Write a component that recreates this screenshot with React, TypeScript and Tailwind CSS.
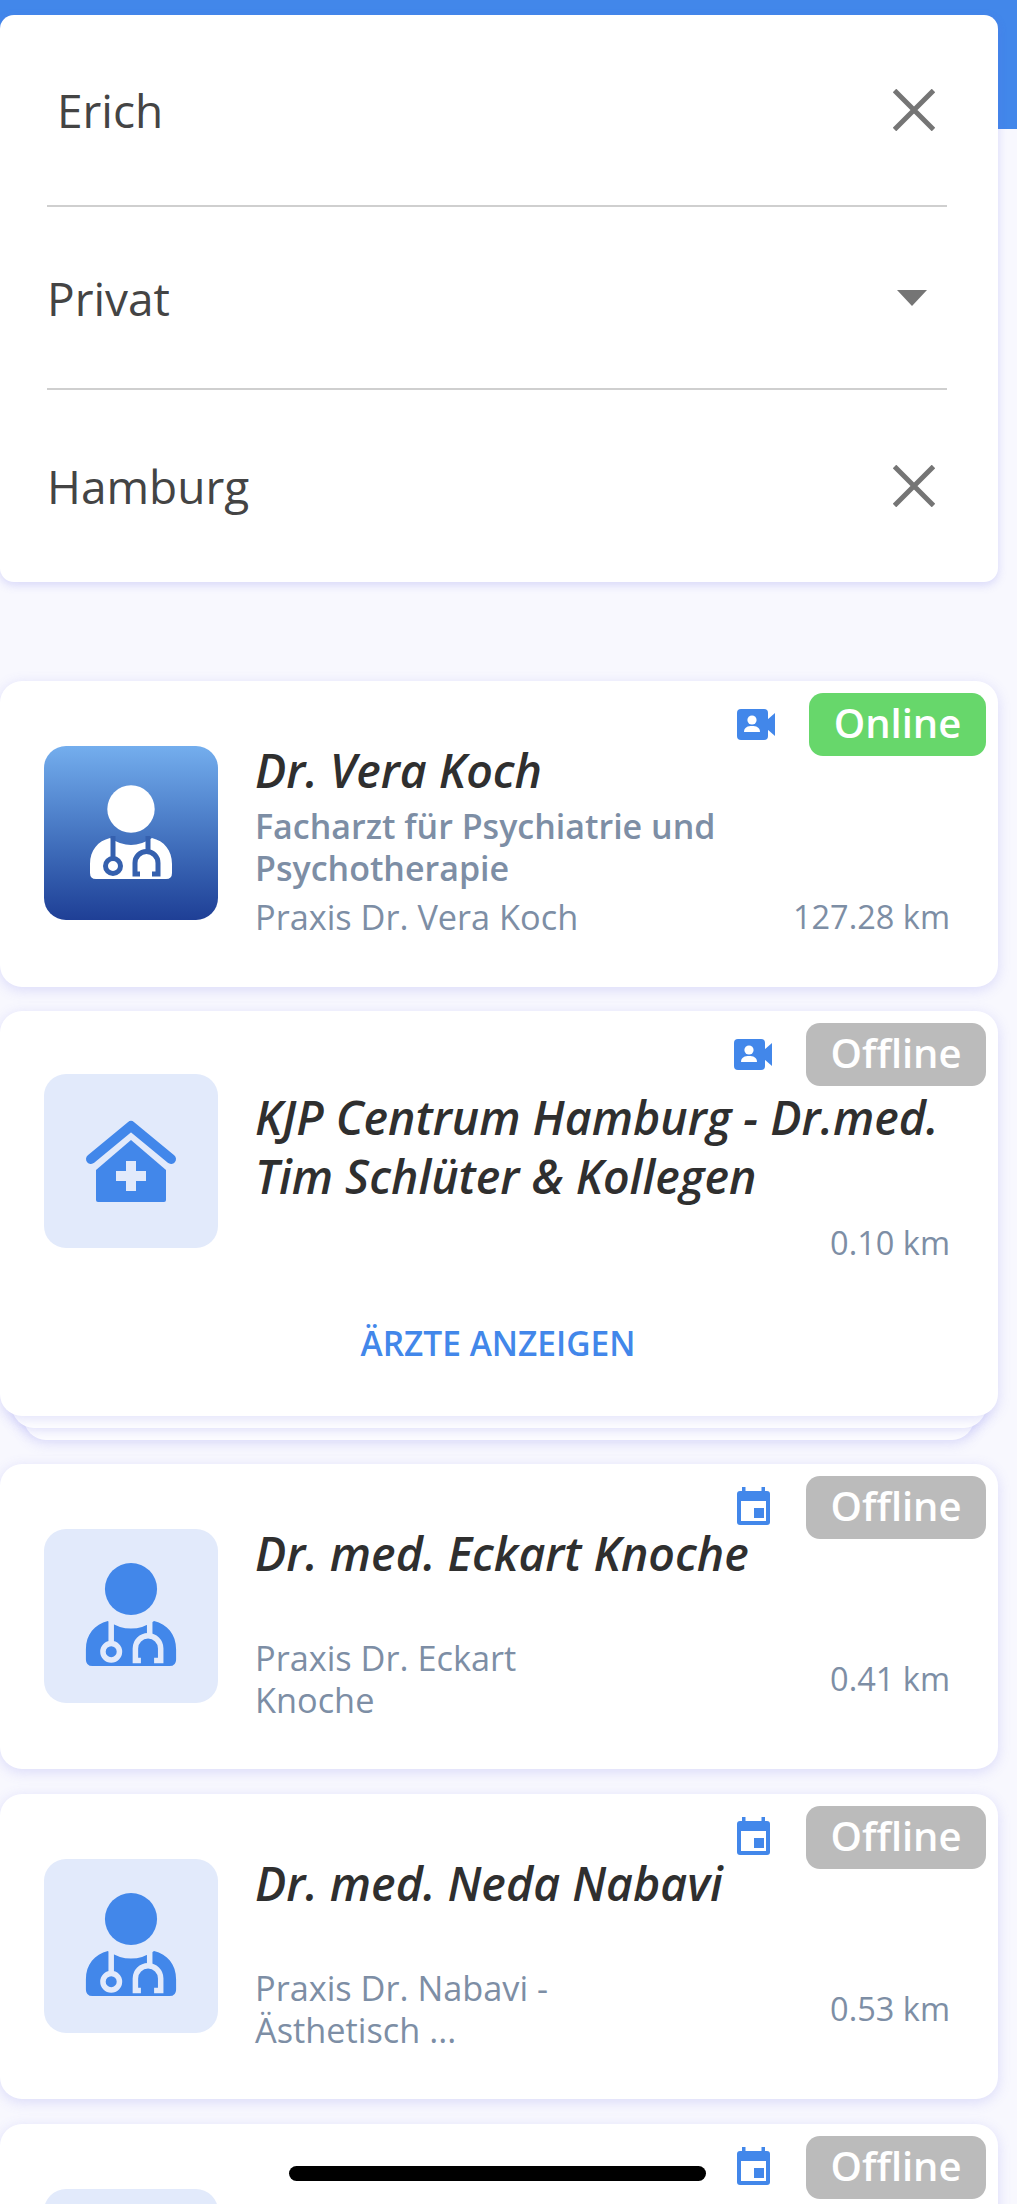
import React from "react";

const BLUE = "#4287ea";

function CloseIcon() {
  return (
    <svg width="42" height="42" viewBox="0 0 42 42" className="shrink-0">
      <path d="M1.5 1.5 L40.5 40.5 M40.5 1.5 L1.5 40.5" stroke="#757575" strokeWidth="5" fill="none" />
    </svg>
  );
}

function DoctorIcon({ color, line, large }: { color: string; line: string; large?: boolean }) {
  return (
    <svg viewBox="0 0 174 174" className="w-full h-full">
      <g transform={large ? "translate(-8.7 -9.3) scale(1.1)" : undefined}>
        <circle cx="87" cy="63" r="23.7" fill={color} />
        <path
          d="M66 92 Q87 106 108 92 C120 95 128 104 128 118 V127 Q128 133 122 133 H52 Q46 133 46 127 V118 C46 104 54 95 66 92 Z"
          fill={color}
        />
        <path d="M69 90 V112" stroke={line} strokeWidth="5" fill="none" />
        <circle cx="69" cy="120" r="7.5" stroke={line} strokeWidth="5" fill="none" />
        <path d="M104 90 V106" stroke={line} strokeWidth="5" fill="none" />
        <path d="M96 128 H91 V117 A11.5 11.5 0 0 1 114 117 V128 H108" stroke={line} strokeWidth="5" fill="none" />
      </g>
    </svg>
  );
}

function HouseIcon() {
  return (
    <svg viewBox="0 0 174 174" className="w-full h-full">
      <path d="M47 85 L87 52 L127 85" stroke={BLUE} strokeWidth="10" strokeLinecap="round" strokeLinejoin="round" fill="none" />
      <path d="M87 66 L122 96 V126 Q122 128 120 128 H54 Q52 128 52 126 V96 Z" fill={BLUE} />
      <path d="M82 87 H92 V97 H102 V107 H92 V117 H82 V107 H72 V97 H82 Z" fill="#e2eafb" />
    </svg>
  );
}

function VideoIcon() {
  return (
    <svg width="38" height="31" viewBox="0 0 38 31" className="mt-[16px] shrink-0">
      <rect x="0" y="0" width="31" height="31" rx="4" fill={BLUE} />
      <path d="M30 11 L38 4 V27 L30 20 Z" fill={BLUE} />
      <circle cx="15" cy="11" r="4.6" fill="#fff" />
      <path d="M7 23 C7 18 11 17 15 17 C19 17 23 18 23 23 Z" fill="#fff" />
    </svg>
  );
}

function CalendarIcon() {
  return (
    <svg width="33" height="38" viewBox="0 0 33 38" className="mt-[11px] shrink-0">
      <rect x="5" y="0" width="3.5" height="7" fill={BLUE} />
      <rect x="24.5" y="0" width="3.5" height="7" fill={BLUE} />
      <rect x="0" y="4" width="33" height="34" rx="3" fill={BLUE} />
      <rect x="4" y="14" width="25" height="20" fill="#fff" />
      <rect x="17" y="21" width="10" height="10" fill={BLUE} />
    </svg>
  );
}

function Status({ online, kind, gap }: { online: boolean; kind: "video" | "calendar"; gap: string }) {
  return (
    <div className={`absolute top-[12px] right-[12px] flex items-start ${gap}`}>
      {kind === "video" ? <VideoIcon /> : <CalendarIcon />}
      <div
        className={`h-[63px] pb-[3px] rounded-[14px] flex items-center justify-center text-white font-semibold text-[40px] leading-none ${
          online ? "w-[177px] bg-[#67d76b]" : "w-[180px] bg-[#bbbbbb]"
        }`}
      >
        {online ? "Online" : "Offline"}
      </div>
    </div>
  );
}

function Avatar({ children, strong, mt }: { children: React.ReactNode; strong?: boolean; mt: string }) {
  return (
    <div
      className={`w-[174px] h-[174px] shrink-0 rounded-[22px] ${mt} ${
        strong ? "bg-gradient-to-b from-[#74aeee] to-[#1f3f96]" : "bg-[#e2eafb]"
      }`}
    >
      {children}
    </div>
  );
}

const cardShadow = "shadow-[0_3px_14px_rgba(100,100,230,0.2)]";
const titleCls = "text-[46.5px] leading-[59px] font-semibold italic text-[#2f2f2f] whitespace-nowrap";
const metaCls = "text-[34.3px] leading-[42px] text-[#7d8ea5]";
const kmCls = "text-[32.5px] leading-[42px] text-[#7d8ea5]";
const fieldCls = "text-[46px] text-[#444444] leading-none";

function Card({ children, h, className = "" }: { children: React.ReactNode; h: string; className?: string }) {
  return (
    <div className={`relative bg-white rounded-[22px] ${cardShadow} ${h} ${className}`}>{children}</div>
  );
}

function PersonCard({
  title,
  practice,
  km,
  kind,
}: {
  title: string;
  practice: React.ReactNode;
  km: string;
  kind: "video" | "calendar";
}) {
  return (
    <Card h="h-[305px]" className="overflow-hidden">
      <Status online={false} kind={kind} gap="gap-[36px]" />
      <div className="flex items-start pl-[44px] gap-[37px] pt-[60px]">
        <Avatar mt="mt-[5px]">
          <DoctorIcon color={BLUE} line="#e2eafb" large />
        </Avatar>
        <div className="flex-1 pr-[48px]">
          <div className={`${titleCls} min-h-[59px]`}>{title}</div>
          <div className="flex items-center justify-between mt-[54px]">
            <div className={metaCls}>{practice}</div>
            <div className={kmCls}>{km}</div>
          </div>
        </div>
      </div>
    </Card>
  );
}

export default function App() {
  return (
    <div className="relative w-[1017px] h-[2204px] overflow-hidden bg-[#f8f8fe] font-['Open_Sans',sans-serif]">
      <div className="h-[129px] bg-[#4287ea]" />
      <div className="pr-[19px] -mt-[114px]">
        <section className="bg-white rounded-[14px] shadow-[0_3px_10px_rgba(100,100,230,0.22)] pl-[47px] pr-[51px] h-[567px] flex flex-col">
          <div className="h-[192px] flex items-center justify-between border-b-2 border-[#cfcfcf] pl-[10px] pr-[12px]">
            <span className={fieldCls}>Erich</span>
            <CloseIcon />
          </div>
          <div className="h-[183px] flex items-center justify-between border-b-2 border-[#cfcfcf] pr-[20px]">
            <span className={fieldCls}>Privat</span>
            <svg width="30" height="16" viewBox="0 0 30 16" className="shrink-0">
              <path d="M0 0 H30 L15 16 Z" fill="#757575" />
            </svg>
          </div>
          <div className="h-[192px] flex items-center justify-between pr-[12px]">
            <span className={fieldCls}>Hamburg</span>
            <CloseIcon />
          </div>
        </section>

        <div className="mt-[99px] flex flex-col">
          <Card h="h-[306px]">
            <Status online kind="video" gap="gap-[34px]" />
            <div className="flex items-start pl-[44px] gap-[37px] pt-[60px]">
              <Avatar strong mt="mt-[5px]">
                <DoctorIcon color="#ffffff" line="#3560ae" />
              </Avatar>
              <div className="flex-1 pr-[48px]">
                <div className={titleCls}>Dr. Vera Koch</div>
                <div className="mt-[5px] text-[34px] leading-[42px] font-semibold text-[#7d8ea5]">
                  Facharzt für Psychiatrie und Psychotherapie
                </div>
                <div className="mt-[7px] flex items-center justify-between">
                  <span className={metaCls}>Praxis Dr. Vera Koch</span>
                  <span className={kmCls}>127.28 km</span>
                </div>
              </div>
            </div>
          </Card>

          <div className="relative mt-[24px] z-0 pb-[24px]">
            <Card h="h-[405px]" className="z-20">
              <Status online={false} kind="video" gap="gap-[34px]" />
              <div className="flex items-start pl-[44px] gap-[37px] pt-[63px]">
                <Avatar mt="mt-0">
                  <HouseIcon />
                </Avatar>
                <div className="flex-1 pr-[48px] pt-[14px]">
                  <div className={titleCls}>
                    KJP Centrum Hamburg - Dr.med.
                    <br />
                    Tim Schlüter &amp; Kollegen
                  </div>
                  <div className={`${kmCls} text-right mt-[16px]`}>0.10 km</div>
                </div>
              </div>
              <div className="absolute left-0 right-0 top-[310px] text-center text-[33.5px] leading-[44px] font-semibold text-[#4287ea] pr-[2px]">
                ÄRZTE ANZEIGEN
              </div>
            </Card>
            <div className={`relative z-10 mx-[12px] -mt-[20px] h-[32px] rounded-b-[22px] bg-white ${cardShadow}`} />
            <div className={`relative z-0 mx-[24px] -mt-[20px] h-[32px] rounded-b-[22px] bg-white ${cardShadow}`} />
          </div>

          <div className="flex flex-col gap-[25px]">
            <PersonCard
              title="Dr. med. Eckart Knoche"
              practice={
                <>
                  Praxis Dr. Eckart
                  <br />
                  Knoche
                </>
              }
              km="0.41 km"
              kind="calendar"
            />
            <PersonCard
              title="Dr. med. Neda Nabavi"
              practice={
                <>
                  Praxis Dr. Nabavi -
                  <br />
                  Ästhetisch ...
                </>
              }
              km="0.53 km"
              kind="calendar"
            />
            <PersonCard title="" practice="" km="" kind="calendar" />
          </div>
        </div>
      </div>
      <div className="absolute left-[289px] top-[2166px] w-[417px] h-[15px] rounded-full bg-black" />
    </div>
  );
}
